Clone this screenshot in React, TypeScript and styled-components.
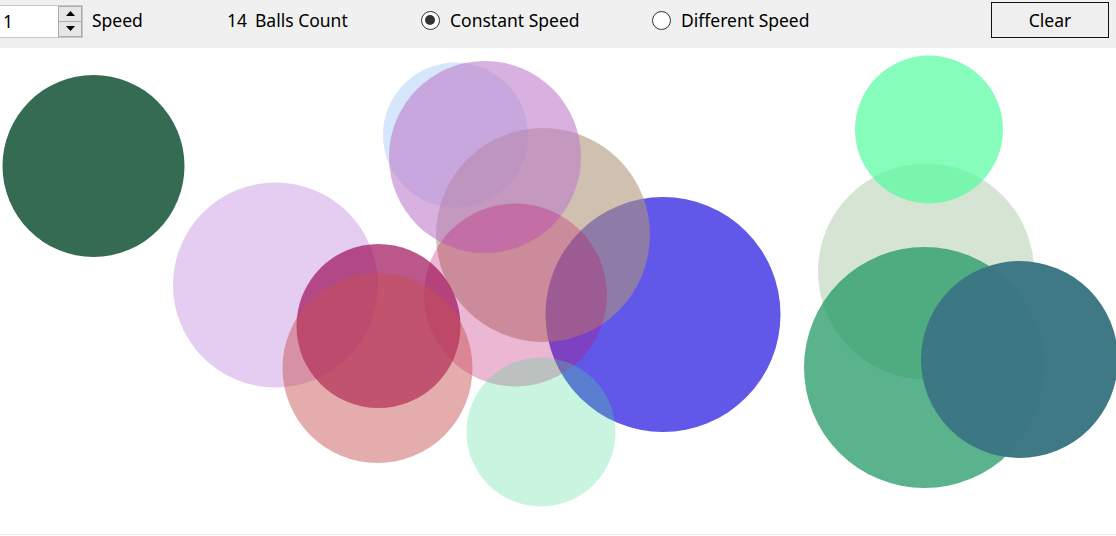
import React from "react";
import styled, { createGlobalStyle } from "styled-components";

const GlobalStyle = createGlobalStyle`
  html, body { margin: 0; padding: 0; background: #ffffff; }
  body { width: 1116px; height: 536px; overflow: hidden; font-family: "Noto Sans", "Open Sans", sans-serif; }
`;

const Page = styled.div`
  display: flex;
  flex-direction: column;
  width: 1116px;
  height: 536px;
`;

const Toolbar = styled.div`
  display: flex;
  align-items: center;
  height: 40px;
  padding-bottom: 8px;
  background: #f0f0f0;
  color: #000;
  font-size: 17.5px;
`;

const Spinner = styled.div`
  display: flex;
  align-items: stretch;
  box-sizing: border-box;
  width: 84px;
  height: 33px;
  margin-left: -1px;
  margin-top: 2px;
  border: 1px solid #c6c6c6;
  background: #fff;
`;

const SpinnerValue = styled.div`
  flex: 1;
  display: flex;
  align-items: center;
  padding-left: 3px;
`;

const SpinnerButtons = styled.div`
  display: flex;
  flex-direction: column;
  width: 24px;
`;

const SpinButton = styled.div`
  flex: 1;
  display: flex;
  align-items: center;
  justify-content: center;
  box-sizing: border-box;
  border: 1px solid #acacac;
  background: #e6e6e6;
  & + & { border-top: none; }
`;

const Label = styled.div<{ $w: number; $ml?: number }>`
  width: ${(p) => p.$w}px;
  margin-left: ${(p) => p.$ml ?? 0}px;
  flex-shrink: 0;
  white-space: nowrap;
`;

const Radio = styled.div<{ $w: number }>`
  display: flex;
  align-items: center;
  gap: 10px;
  width: ${(p) => p.$w}px;
  flex-shrink: 0;
  white-space: nowrap;
`;

const RadioCircle = styled.span<{ $checked?: boolean }>`
  position: relative;
  flex-shrink: 0;
  box-sizing: border-box;
  width: 19px;
  height: 19px;
  border-radius: 50%;
  border: 1.5px solid #333;
  background: #fff;
  &::after {
    content: "";
    display: ${(p) => (p.$checked ? "block" : "none")};
    position: absolute;
    left: 3px;
    top: 3px;
    width: 10px;
    height: 10px;
    border-radius: 50%;
    background: #333;
  }
`;

const ClearButton = styled.div`
  display: flex;
  align-items: center;
  justify-content: center;
  box-sizing: border-box;
  width: 118px;
  height: 36px;
  margin-top: -1px;
  border: 1.5px solid #111;
  background: #efefef;
`;

const Canvas = styled.div`
  height: 486px;
  background: #fff;
  overflow: hidden;
`;

const Footer = styled.div`
  height: 1px;
  background: #ececec;
`;

type Ball = { cx: number; cy: number; r: number; c: string; a: number };

const balls: Ball[] = [
  { cx: 93.5, cy: 118, r: 91, c: "rgb(53,107,82)", a: 1 },
  { cx: 275.5, cy: 237, r: 102.5, c: "rgb(178,112,212)", a: 0.35 },
  { cx: 455.5, cy: 87, r: 72.5, c: "rgb(118,172,242)", a: 0.3 },
  { cx: 663, cy: 266.5, r: 117.5, c: "rgb(97,87,232)", a: 1 },
  { cx: 543, cy: 187, r: 107, c: "rgb(175,148,121)", a: 0.59 },
  { cx: 485, cy: 109, r: 96, c: "rgb(190,125,203)", a: 0.6 },
  { cx: 515.5, cy: 247, r: 91.5, c: "rgb(192,18,105)", a: 0.3 },
  { cx: 378.5, cy: 278, r: 82, c: "rgb(158,16,88)", a: 0.7 },
  { cx: 377.5, cy: 320, r: 95, c: "rgb(200,79,81)", a: 0.47 },
  { cx: 541, cy: 384, r: 74.5, c: "rgb(75,218,152)", a: 0.3 },
  { cx: 926, cy: 223.5, r: 108, c: "rgb(118,168,108)", a: 0.3 },
  { cx: 929, cy: 81.5, r: 74, c: "rgb(82,252,158)", a: 0.7 },
  { cx: 924.5, cy: 319.5, r: 120.5, c: "rgb(29,151,97)", a: 0.73 },
  { cx: 1019.5, cy: 311.5, r: 98.5, c: "rgb(59,119,131)", a: 0.985 },
];

const Arrow = ({ up }: { up?: boolean }) => (
  <svg width="9" height="5" viewBox="0 0 9 5">
    <polygon points={up ? "0,5 9,5 4.5,0" : "0,0 9,0 4.5,5"} fill="#000" />
  </svg>
);

export default function App() {
  return (
    <>
      <GlobalStyle />
      <Page>
        <Toolbar>
          <Spinner>
            <SpinnerValue>1</SpinnerValue>
            <SpinnerButtons>
              <SpinButton>
                <Arrow up />
              </SpinButton>
              <SpinButton>
                <Arrow />
              </SpinButton>
            </SpinnerButtons>
          </Spinner>
          <Label $w={135} $ml={9}>Speed</Label>
          <Label $w={28}>14</Label>
          <Label $w={166}>Balls Count</Label>
          <Radio $w={231}>
            <RadioCircle $checked />
            Constant Speed
          </Radio>
          <Radio $w={339}>
            <RadioCircle />
            Different Speed
          </Radio>
          <ClearButton>Clear</ClearButton>
        </Toolbar>
        <Canvas>
          <svg width="1116" height="486" viewBox="0 0 1116 486">
            {balls.map((b, i) => (
              <circle key={i} cx={b.cx} cy={b.cy} r={b.r} fill={b.c} fillOpacity={b.a} />
            ))}
          </svg>
        </Canvas>
        <Footer />
      </Page>
    </>
  );
}
